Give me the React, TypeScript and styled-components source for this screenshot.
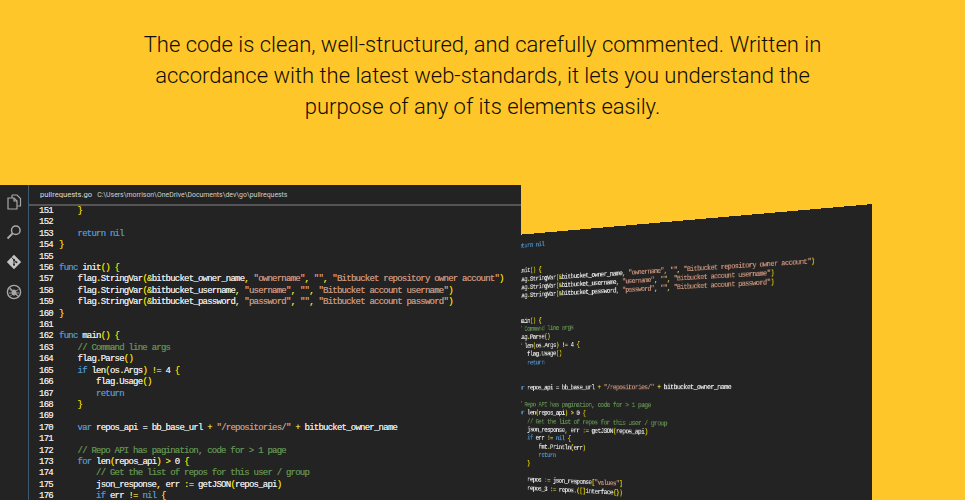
import React from 'react';
import styled, { createGlobalStyle } from 'styled-components';

const GlobalStyle = createGlobalStyle`
  html, body {
    margin: 0;
    padding: 0;
    background: #ffc629;
    overflow: hidden;
  }
`;

type TokenKind = 'plain' | 'keyword' | 'comment' | 'string' | 'bracket' | 'punct';

const tokenColors: Record<TokenKind, string> = {
  plain: '#e2e2e2',
  keyword: '#4f8fc4',
  comment: '#5f8a4e',
  string: '#c49078',
  bracket: '#e4d400',
  punct: '#dcd640',
};

const codeLines: string[] = [
  '    }',
  '',
  '    return nil',
  '}',
  '',
  'func init() {',
  '    flag.StringVar(&bitbucket_owner_name, "ownername", "", "Bitbucket repository owner account")',
  '    flag.StringVar(&bitbucket_username, "username", "", "Bitbucket account username")',
  '    flag.StringVar(&bitbucket_password, "password", "", "Bitbucket account password")',
  '}',
  '',
  'func main() {',
  '    // Command line args',
  '    flag.Parse()',
  '    if len(os.Args) != 4 {',
  '        flag.Usage()',
  '        return',
  '    }',
  '',
  '    var repos_api = bb_base_url + "/repositories/" + bitbucket_owner_name',
  '',
  '    // Repo API has pagination, code for > 1 page',
  '    for len(repos_api) > 0 {',
  '        // Get the list of repos for this user / group',
  '        json_response, err := getJSON(repos_api)',
  '        if err != nil {',
  '            fmt.Println(err)',
  '            return',
  '        }',
  '',
  '        repos := json_response["values"]',
  '        repos_3 := repos.([]interface{})',
];

const tokenPattern = /(\/\/.*$)|("[^"]*")|\b(func|return|nil|if|for|var)\b|([(){}[\]])|(:=|!=|[.,+>&])/g;

const tokenize = (line: string): { kind: TokenKind; text: string }[] => {
  const tokens: { kind: TokenKind; text: string }[] = [];
  let last = 0;
  for (const m of line.matchAll(tokenPattern)) {
    const at = m.index ?? 0;
    if (at > last) tokens.push({ kind: 'plain', text: line.slice(last, at) });
    let kind: TokenKind = 'punct';
    if (m[1]) kind = 'comment';
    else if (m[2]) kind = 'string';
    else if (m[3]) kind = 'keyword';
    else if (m[4]) kind = 'bracket';
    tokens.push({ kind, text: m[0] });
    last = at + m[0].length;
  }
  if (last < line.length) tokens.push({ kind: 'plain', text: line.slice(last) });
  return tokens;
};

const s = {
  Page: styled.div`
    width: 965px;
    height: 500px;
    overflow: hidden;
    background: #ffc629;
    display: flex;
    flex-direction: column;
  `,
  Intro: styled.p`
    width: 700px;
    margin: 29px auto 63px;
    text-align: center;
    font-family: Roboto, 'Liberation Sans', sans-serif;
    font-weight: 300;
    font-size: 22px;
    line-height: 31px;
    color: #0f0d04;
  `,
  Stage: styled.div`
    position: relative;
    flex: 1;
    overflow: hidden;
  `,
  BackWindow: styled.div`
    position: absolute;
    left: 0;
    top: 0;
    width: 572px;
    height: 380px;
    overflow: hidden;
    background: #232323;
    padding: 11px 0 0 29px;
    box-sizing: border-box;
    transform-origin: 0 0;
    transform: matrix3d(0.4212, -0.06713, 0, -0.000322, 0, 0.7106, 0, 0, 0, 0, 1, 0, 470.4, 54, 0, 1);
  `,
  FrontWindow: styled.div`
    position: relative;
    width: 521px;
    height: 315px;
    display: flex;
    background: #232323;
    overflow: hidden;
  `,
  ActivityBar: styled.div`
    width: 28px;
    flex: none;
    border-right: 1px solid #3d5a72;
    display: flex;
    flex-direction: column;
    align-items: center;
    gap: 14px;
    padding-top: 9px;
    box-sizing: content-box;
    color: #a8a8a8;
  `,
  Editor: styled.div`
    flex: 1;
    min-width: 0;
  `,
  TitleBar: styled.div`
    height: 19px;
    border-bottom: 2px solid #555555;
    display: flex;
    align-items: center;
    gap: 5px;
    padding-left: 11px;
    font-family: Roboto, 'Liberation Sans', sans-serif;
    color: #dedede;
    white-space: nowrap;
  `,
  FileName: styled.span`
    font-size: 7.6px;
  `,
  FilePath: styled.span`
    font-size: 6.9px;
    color: #d0d0d0;
  `,
  Code: styled.div`
    font-family: 'Liberation Mono', monospace;
    font-size: 9px;
    letter-spacing: -0.77px;
    line-height: 11.41px;
    text-shadow: 0 0 0.4px currentColor;
  `,
  Line: styled.div`
    display: flex;
    height: 11.41px;
    white-space: pre;
  `,
  LineNumber: styled.span`
    width: 24px;
    flex: none;
    text-align: right;
    margin-right: 6px;
    color: #e2e2e2;
  `,
  Token: styled.span<{ $kind: TokenKind }>`
    color: ${(props) => tokenColors[props.$kind]};
  `,
};

const CodeLines = ({ from }: { from: number }) => (
  <s.Code>
    {codeLines.slice(from - 151).map((line, index) => (
      <s.Line key={index}>
        <s.LineNumber>{from + index}</s.LineNumber>
        {tokenize(line).map((token, i) => (
          <s.Token key={i} $kind={token.kind}>
            {token.text}
          </s.Token>
        ))}
      </s.Line>
    ))}
  </s.Code>
);

const FilesIcon = () => (
  <svg width="16" height="16" viewBox="0 0 16 16" fill="none" stroke="currentColor" strokeWidth="1.200">
    <path d="M6 1h5l3.500 3.500V12H11.500" />
    <path d="M6 1v3" />
    <path d="M2 4h6l3 3v8H2z" />
    <path d="M8 4v3h3" />
  </svg>
);

const SearchIcon = () => (
  <svg width="16" height="16" viewBox="0 0 16 16" fill="none" stroke="currentColor" strokeWidth="1.500">
    <circle cx="9.800" cy="6.200" r="4.300" />
    <path d="M6.500 9.500 1.500 14.500" strokeWidth="1.900" />
  </svg>
);

const GitIcon = () => (
  <svg width="16" height="16" viewBox="0 0 16 16">
    <path d="M8 .8 15.200 8 8 15.200.8 8z" fill="#c4c4c4" />
    <path d="M5.600 3.400 8 5.800m0 0v5M8 5.800l2.400 2.400" stroke="#232323" strokeWidth="1" fill="none" />
    <circle cx="8" cy="5.800" r="1" fill="#232323" />
    <circle cx="8" cy="10.800" r="1" fill="#232323" />
    <circle cx="10.400" cy="8.200" r="1" fill="#232323" />
  </svg>
);

const NoBugIcon = () => (
  <svg width="16" height="16" viewBox="0 0 16 16" fill="none" stroke="currentColor">
    <circle cx="8" cy="8" r="6.600" strokeWidth="1.400" />
    <ellipse cx="8" cy="8.500" rx="2.300" ry="3" fill="currentColor" stroke="none" />
    <path d="M3.500 5.500 6 7m6.500-1.500L10 7M3 9h3m7 0h-3M4 12.500 6 10.500m6 2-2-2" strokeWidth="0.900" />
    <path d="M3.300 3.300 12.700 12.700" strokeWidth="1.200" />
  </svg>
);

const App = (): JSX.Element => (
  <s.Page>
    <GlobalStyle />
    <s.Intro>
      The code is clean, well-structured, and carefully commented. Written in accordance with the
      latest web-standards, it lets you understand the purpose of any of its elements easily.
    </s.Intro>
    <s.Stage>
      <s.BackWindow>
        <CodeLines from={153} />
      </s.BackWindow>
      <s.FrontWindow>
        <s.ActivityBar>
          <FilesIcon />
          <SearchIcon />
          <GitIcon />
          <NoBugIcon />
        </s.ActivityBar>
        <s.Editor>
          <s.TitleBar>
            <s.FileName>pullrequests.go</s.FileName>
            <s.FilePath>C:\Users\morrison\OneDrive\Documents\dev\go\pullrequests</s.FilePath>
          </s.TitleBar>
          <CodeLines from={151} />
        </s.Editor>
      </s.FrontWindow>
    </s.Stage>
  </s.Page>
);

export default App;
